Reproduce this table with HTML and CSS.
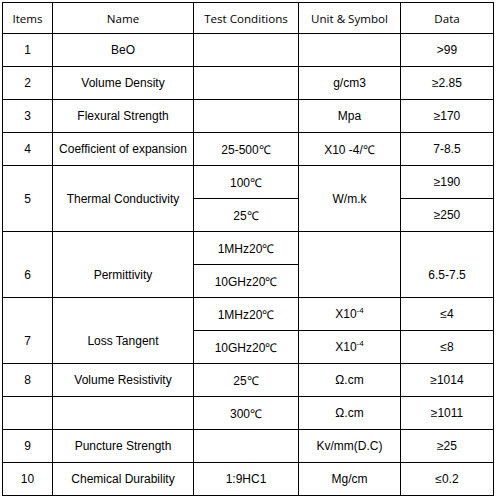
FILE: index.html
```html
<!DOCTYPE html>
<html>
<head>
<meta charset="utf-8">
<link rel="stylesheet" href="styles.css">
</head>
<body>
<table class="spec">
  <colgroup>
    <col class="c-items"><col class="c-name"><col class="c-test"><col class="c-unit"><col class="c-data">
  </colgroup>
  <thead>
    <tr class="head">
      <th>Items</th><th>Name</th><th>Test Conditions</th><th>Unit &amp; Symbol</th><th>Data</th>
    </tr>
  </thead>
  <tbody>
    <tr><td>1</td><td>BeO</td><td></td><td></td><td>&gt;99</td></tr>
    <tr><td>2</td><td>Volume Density</td><td></td><td>g/cm3</td><td>≥2.85</td></tr>
    <tr><td>3</td><td>Flexural Strength</td><td></td><td>Mpa</td><td>≥170</td></tr>
    <tr><td>4</td><td>Coefficient of expansion</td><td>25-500℃</td><td>X10 -4/℃</td><td>7-8.5</td></tr>
    <tr><td rowspan="2">5</td><td rowspan="2">Thermal Conductivity</td><td>100℃</td><td rowspan="2">W/m.k</td><td>≥190</td></tr>
    <tr><td>25℃</td><td>≥250</td></tr>
    <tr><td rowspan="2" class="low">6</td><td rowspan="2" class="low">Permittivity</td><td>1MHz20℃</td><td rowspan="2"></td><td rowspan="2" class="low">6.5-7.5</td></tr>
    <tr><td>10GHz20℃</td></tr>
    <tr><td rowspan="2" class="low">7</td><td rowspan="2" class="low">Loss Tangent</td><td>1MHz20℃</td><td>X10<sup>-4</sup></td><td>≤4</td></tr>
    <tr><td>10GHz20℃</td><td>X10<sup>-4</sup></td><td>≤8</td></tr>
    <tr><td>8</td><td>Volume Resistivity</td><td>25℃</td><td>Ω.cm</td><td>≥1014</td></tr>
    <tr><td></td><td></td><td>300℃</td><td>Ω.cm</td><td>≥1011</td></tr>
    <tr><td>9</td><td>Puncture Strength</td><td></td><td>Kv/mm(D.C)</td><td>≥25</td></tr>
    <tr><td>10</td><td>Chemical Durability</td><td>1:9HC1</td><td>Mg/cm</td><td>≤0.2</td></tr>
  </tbody>
</table>
</body>
</html>
```

FILE: styles.css
```css
html, body {
  margin: 0;
  padding: 0;
  background: #fff;
}
body {
  padding: 2px 0 0 2px;
}
.spec {
  border-collapse: collapse;
  table-layout: fixed;
  width: 491px;
  font-family: "Liberation Sans", Arial, sans-serif;
  font-size: 12px;
  color: #000;
}
.c-items { width: 50px; }
.c-name { width: 141px; }
.c-test { width: 105px; }
.c-unit { width: 102px; }
.c-data { width: 93px; }
.spec th, .spec td {
  border: 1px solid #000;
  text-align: center;
  vertical-align: middle;
  padding: 0;
  white-space: nowrap;
}
.spec th {
  font-family: "Open Sans", "Noto Sans", sans-serif;
  font-weight: normal;
  font-size: 11.6px;
  height: 30px;
}
.spec td {
  height: 32px;
}
.spec td.low {
  padding-top: 20px;
}
.spec sup {
  font-size: 8px;
  vertical-align: 5px;
  line-height: 0;
}
```
